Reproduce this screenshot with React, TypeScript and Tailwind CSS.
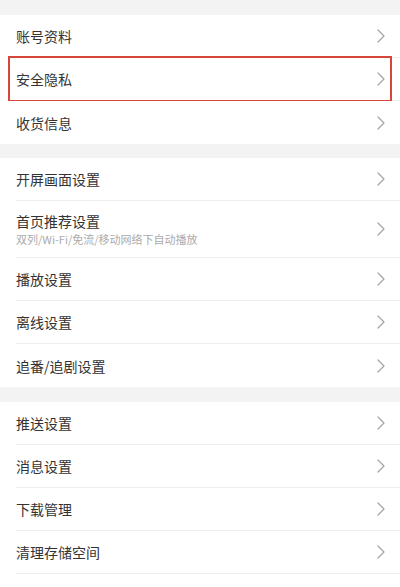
import React from "react";

const Chevron = () => (
  <svg width="8" height="14" viewBox="0 0 8 14" fill="none" className="shrink-0">
    <path d="M1 1 L7 7 L1 13" stroke="#a3a3a3" strokeWidth="1.2" strokeLinecap="round" strokeLinejoin="round" />
  </svg>
);

type Item = { title: string; sub?: string; highlight?: boolean };

const Row = ({ item, last }: { item: Item; last: boolean }) => (
  <div className="relative pl-4 bg-white">
    <div
      className={`flex items-center justify-between pr-[15px] ${item.sub ? "h-[57px]" : "h-[43px]"} ${
        last ? "" : "border-b border-[#efefef]"
      }`}
    >
      <div className="flex flex-col">
        <span className="text-[14px] leading-[18px] text-[#333]">{item.title}</span>
        {item.sub && <span className="mt-[2px] text-[11px] leading-[14px] text-[#ababab]">{item.sub}</span>}
      </div>
      <Chevron />
    </div>
    {item.highlight && (
      <div className="absolute left-2 right-2 top-[-2px] bottom-[-1px] border-2 border-[#d4473a] pointer-events-none" />
    )}
  </div>
);

const Section = ({ items, trailingLine }: { items: Item[]; trailingLine?: boolean }) => (
  <div className="bg-white flex flex-col">
    {items.map((it, i) => (
      <Row key={it.title} item={it} last={i === items.length - 1 && !trailingLine} />
    ))}
  </div>
);

export default function App() {
  return (
    <div
      className="w-[400px] h-[587px] overflow-hidden bg-[#f3f3f3] flex flex-col"
      style={{ fontFamily: '"Noto Sans CJK SC", "Noto Sans", sans-serif' }}
    >
      <div className="h-[15px] shrink-0" />
      <Section
        items={[{ title: "账号资料" }, { title: "安全隐私", highlight: true }, { title: "收货信息" }]}
      />
      <div className="h-[14px] shrink-0" />
      <Section
        items={[
          { title: "开屏画面设置" },
          { title: "首页推荐设置", sub: "双列/Wi-Fi/免流/移动网络下自动播放" },
          { title: "播放设置" },
          { title: "离线设置" },
          { title: "追番/追剧设置" },
        ]}
      />
      <div className="h-[15px] shrink-0" />
      <Section
        trailingLine
        items={[{ title: "推送设置" }, { title: "消息设置" }, { title: "下载管理" }, { title: "清理存储空间" }]}
      />
      <div className="bg-white flex-1" />
    </div>
  );
}
